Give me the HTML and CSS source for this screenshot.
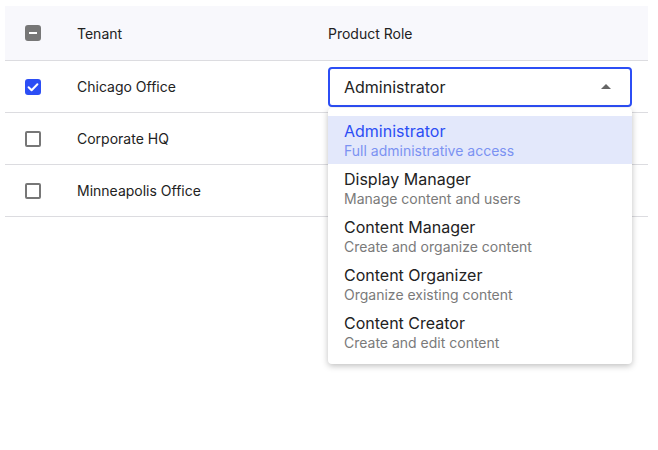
FILE: index.html
```html
<!DOCTYPE html>
<html lang="en">
<head>
    <meta charset="UTF-8">
    <title>Tenant Roles</title>
    <link rel="stylesheet" href="styles.css">
</head>
<body>
    <div class="roles-table">
        <div class="row header">
            <div class="cell-check"><span class="checkbox mixed"></span></div>
            <div>Tenant</div>
            <div>Product Role</div>
        </div>
        <div class="row">
            <div class="cell-check">
                <span class="checkbox checked">
                    <svg viewBox="0 0 16 16" width="16" height="16"><path d="M3.6 8.2l3 3 5.8-6" fill="none" stroke="#fff" stroke-width="2" stroke-linecap="round" stroke-linejoin="round"/></svg>
                </span>
            </div>
            <div>Chicago Office</div>
            <div class="role-cell">
                <div class="select">
                    <span>Administrator</span>
                    <span class="caret"></span>
                </div>
                <ul class="menu">
                    <li class="active"><div class="opt-title">Administrator</div><div class="opt-desc">Full administrative access</div></li>
                    <li><div class="opt-title">Display Manager</div><div class="opt-desc">Manage content and users</div></li>
                    <li><div class="opt-title">Content Manager</div><div class="opt-desc">Create and organize content</div></li>
                    <li><div class="opt-title">Content Organizer</div><div class="opt-desc">Organize existing content</div></li>
                    <li><div class="opt-title">Content Creator</div><div class="opt-desc">Create and edit content</div></li>
                </ul>
            </div>
        </div>
        <div class="row">
            <div class="cell-check"><span class="checkbox"></span></div>
            <div>Corporate HQ</div>
            <div></div>
        </div>
        <div class="row">
            <div class="cell-check"><span class="checkbox"></span></div>
            <div>Minneapolis Office</div>
            <div></div>
        </div>
    </div>
</body>
</html>
```

FILE: styles.css
```css
html, body {
    min-height: 100vh;
}
body {
    margin: 0;
    font-family: Inter, "Noto Sans", sans-serif;
    color: #222;
    background: #fff;
}
.roles-table {
    padding: 6px 10px 0 5px;
    font-size: 14px;
}
.row {
    display: grid;
    grid-template-columns: 72px 251px 1fr;
    align-items: center;
    height: 51px;
    border-bottom: 1px solid #dcdce0;
}
.row.header {
    height: 54px;
    background: #f8f8fc;
}
.cell-check {
    padding-left: 20px;
    display: flex;
    align-items: center;
}
.checkbox {
    box-sizing: border-box;
    width: 16px;
    height: 16px;
    border: 2px solid #777;
    border-radius: 2px;
    display: flex;
    align-items: center;
    justify-content: center;
}
.checkbox.mixed {
    background: #777;
    border-radius: 3px;
}
.checkbox.mixed::after {
    content: "";
    width: 8px;
    height: 2px;
    background: #fff;
}
.checkbox.checked {
    background: #2c4ef5;
    border-color: #2c4ef5;
    border-radius: 3px;
}
.checkbox.checked svg {
    flex: none;
}
.role-cell {
    position: relative;
    padding-right: 16px;
}
.select {
    box-sizing: border-box;
    height: 40px;
    border: 2px solid #2c4ef5;
    border-radius: 4px;
    display: flex;
    align-items: center;
    justify-content: space-between;
    padding: 0 19px 0 14px;
    font-size: 16px;
}
.caret {
    width: 0;
    height: 0;
    border-left: 5px solid transparent;
    border-right: 5px solid transparent;
    border-bottom: 5px solid #666;
}
.menu {
    position: absolute;
    top: 41px;
    left: 0;
    right: 16px;
    margin: 0;
    padding: 8px 0;
    list-style: none;
    background: #fff;
    border-radius: 4px;
    box-shadow: 0 2px 6px rgba(0, 0, 0, 0.25);
    z-index: 2;
}
.menu li {
    height: 48px;
    padding: 4px 16px 0;
    box-sizing: border-box;
}
.menu li.active {
    background: #e3e8fb;
}
.opt-title {
    font-size: 16px;
    line-height: 22px;
}
.opt-desc {
    font-size: 14px;
    line-height: 18px;
    color: #7a7a7a;
}
.menu li.active .opt-title {
    color: #2c4ef5;
}
.menu li.active .opt-desc {
    color: #7b92f2;
}
```
